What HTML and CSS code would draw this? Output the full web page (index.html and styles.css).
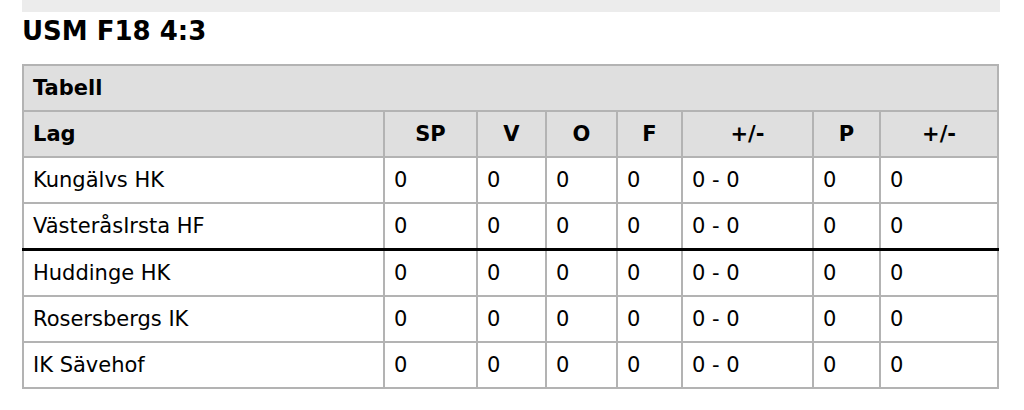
FILE: index.html
```html
<!DOCTYPE html>
<html>
<head>
<meta charset="utf-8">
<link rel="stylesheet" href="styles.css">
</head>
<body>
<div class="page">
  <div class="topbar"></div>
  <h1 class="title">USM F18 4:3</h1>
  <table class="standings">
    <colgroup>
      <col class="c-lag"><col class="c-sp"><col class="c-v"><col class="c-o"><col class="c-f"><col class="c-diff"><col class="c-p"><col class="c-diff2">
    </colgroup>
    <thead>
      <tr><th colspan="8" class="caption-cell">Tabell</th></tr>
      <tr class="head">
        <th class="left">Lag</th><th>SP</th><th>V</th><th>O</th><th>F</th><th>+/-</th><th>P</th><th>+/-</th>
      </tr>
    </thead>
    <tbody>
      <tr><td>Kungälvs HK</td><td>0</td><td>0</td><td>0</td><td>0</td><td>0 - 0</td><td>0</td><td>0</td></tr>
      <tr class="cut"><td>VästeråsIrsta HF</td><td>0</td><td>0</td><td>0</td><td>0</td><td>0 - 0</td><td>0</td><td>0</td></tr>
      <tr><td>Huddinge HK</td><td>0</td><td>0</td><td>0</td><td>0</td><td>0 - 0</td><td>0</td><td>0</td></tr>
      <tr><td>Rosersbergs IK</td><td>0</td><td>0</td><td>0</td><td>0</td><td>0 - 0</td><td>0</td><td>0</td></tr>
      <tr><td>IK Sävehof</td><td>0</td><td>0</td><td>0</td><td>0</td><td>0 - 0</td><td>0</td><td>0</td></tr>
    </tbody>
  </table>
</div>
</body>
</html>
```
FILE: styles.css
```css
html, body {
  margin: 0;
  padding: 0;
  background: #ffffff;
}
body {
  font-family: "DejaVu Sans", Verdana, sans-serif;
  color: #000;
}
.page {
  padding-left: 22px;
  width: 976px;
}
.topbar {
  height: 12px;
  background: #ececec;
  width: 978px;
}
.title {
  margin: 0;
  font-size: 26px;
  font-weight: bold;
  line-height: 38px;
  height: 40px;
  margin-top: 0;
  margin-bottom: 12px;
}
.standings {
  border-collapse: collapse;
  table-layout: fixed;
  width: 975px;
  font-size: 21px;
}
.c-lag { width: 361px; }
.c-sp { width: 93px; }
.c-v { width: 69px; }
.c-o { width: 71px; }
.c-f { width: 65px; }
.c-diff { width: 131px; }
.c-p { width: 67px; }
.c-diff2 { width: 118px; }
.standings th, .standings td {
  border: 2px solid #b3b3b3;
  height: 44px;
  padding: 0 0 0 9px;
  white-space: nowrap;
  vertical-align: middle;
}
.standings th {
  background: #dfdfdf;
  font-weight: bold;
  text-align: center;
  padding: 0;
}
.standings th.left, .standings th.caption-cell {
  text-align: left;
  padding-left: 9px;
}
.standings td {
  text-align: left;
}
.standings tr.cut td {
  border-bottom: 3px solid #000;
}
```
